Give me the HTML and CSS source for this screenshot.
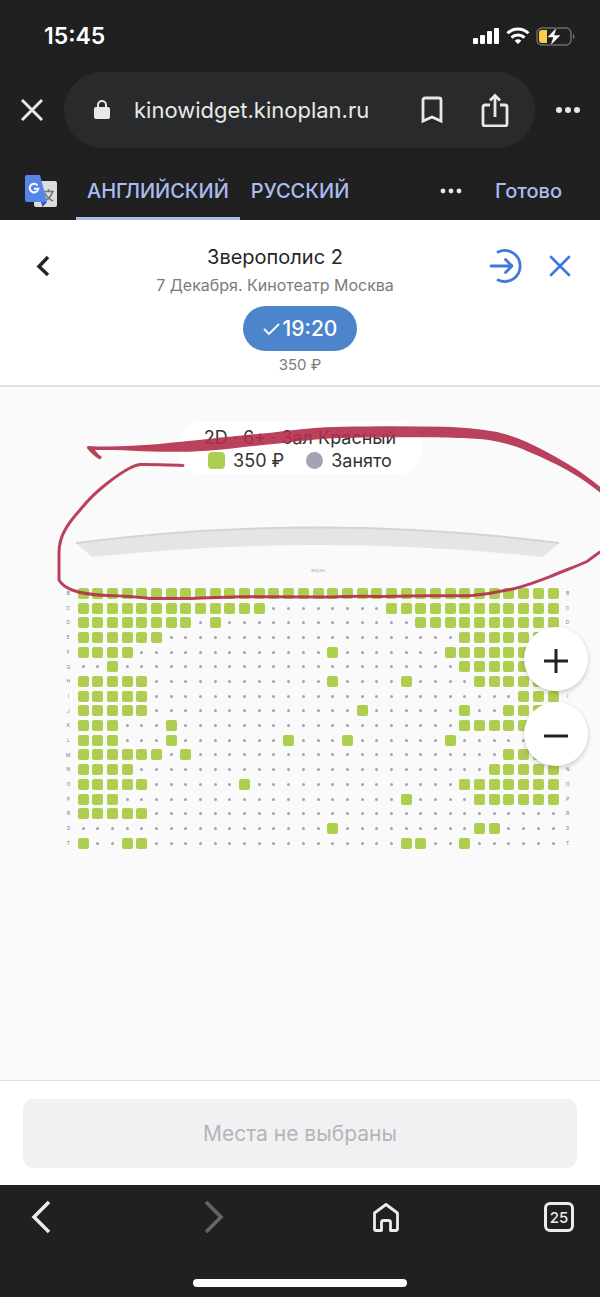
FILE: index.html
```html
<!DOCTYPE html>
<html lang="ru">
<head>
<meta charset="UTF-8" />
<meta name="viewport" content="width=device-width, initial-scale=1.0" />
<title>Зверополис 2</title>
<link rel="stylesheet" href="styles.css">
</head>
<body>
<div class="status">
<span class="clock">15:45</span>
<svg class="status-icons" width="104" height="20" viewBox="0 0 104 20" aria-hidden="true">
<g fill="#fff">
<rect x="1" y="12" width="5" height="6" rx="1"/>
<rect x="8" y="9" width="5" height="9" rx="1"/>
<rect x="15" y="5" width="5" height="13" rx="1"/>
<rect x="22" y="2" width="5" height="16" rx="1"/>
<path d="M46 18l-3.300-3.300a4.700 4.700 0 0 1 6.600 0z"/>
</g>
<g fill="none" stroke="#fff" stroke-width="3">
<path d="M35.500 7.200a15 15 0 0 1 21 0"/>
<path d="M39.500 11.600a9.300 9.300 0 0 1 13 0"/>
</g>
<rect x="65" y="2" width="34" height="17" rx="5" fill="none" stroke="#6c6c6c" stroke-width="1.500"/>
<path d="M101 8v5c2-.5 2-4.500 0-5z" fill="#6c6c6c"/>
<path d="M70 4h5v13h-5a3 3 0 0 1-3-3V7a3 3 0 0 1 3-3z" fill="#f7ce46"/>
<path d="M85 1L75 11.500h6l-3 8.500L89 9h-6.500z" fill="#fff" stroke="#202020" stroke-width=".6"/>
</svg>
</div>
<div class="browser">
<button class="icon-btn" aria-label="Закрыть вкладку">
<svg width="24" height="24" viewBox="0 0 24 24"><path d="M2 2l20 20M22 2L2 22" stroke="#e8e8e8" stroke-width="3" fill="none"/></svg>
</button>
<div class="address">
<svg class="lock" width="16" height="20" viewBox="0 0 16 20"><rect x="0" y="7" width="16" height="12" rx="2" fill="#e8e8e8"/><path d="M4 8V5a4 4 0 0 1 8 0v3" stroke="#e8e8e8" stroke-width="2" fill="none"/></svg>
<a class="url" href="#">kinowidget.kinoplan.ru</a>
<button class="icon-btn" aria-label="Закладка">
<svg width="22" height="28" viewBox="0 0 22 28"><path d="M2 25V4a2 2 0 0 1 2-2h14a2 2 0 0 1 2 2v21L11 21z" stroke="#e8e8e8" stroke-width="2.800" fill="none"/></svg>
</button>
<button class="icon-btn" aria-label="Поделиться">
<svg width="28" height="34" viewBox="0 0 28 34"><g stroke="#e8e8e8" stroke-width="2.800" fill="none"><path d="M9 12H4a2 2 0 0 0-2 2v17a2 2 0 0 0 2 2h20a2 2 0 0 0 2-2V14a2 2 0 0 0-2-2h-5M14 24V3M9 7.500L14 2.500l5 5"/></g></svg>
</button>
</div>
<button class="icon-btn" aria-label="Меню">
<svg width="26" height="8" viewBox="0 0 26 8" fill="#e8e8e8"><circle cx="4" cy="4" r="3"/><circle cx="13" cy="4" r="3"/><circle cx="22" cy="4" r="3"/></svg>
</button>
</div>
<div class="translate">
<svg class="logo" width="34" height="34" viewBox="0 0 34 34" aria-hidden="true">
<rect x="10" y="7" width="23" height="26" rx="2" fill="#dcdddd"/>
<path d="M19 17.500h11M24.500 15v2.500M28.500 17.500c-1 5-5 8-8.500 9.500M21 19c1 3 4 6 8 8" stroke="#6b7a7a" stroke-width="1.500" fill="none"/>
<path d="M17 28h6l-4.500 5z" fill="#3a50b8"/>
<path d="M3 1h13l7 27H3a2 2 0 0 1-2-2V3a2 2 0 0 1 2-2z" fill="#5585e8"/>
<path d="M13.500 11.500a4.300 4.300 0 1 0 .8 3.300H10" stroke="#fff" stroke-width="2" fill="none"/>
</svg>
<button class="lang active">АНГЛИЙСКИЙ</button>
<button class="lang">РУССКИЙ</button>
<button class="icon-btn more" aria-label="Настройки перевода">
<svg width="22" height="8" viewBox="0 0 22 8" fill="#e8e8e8"><circle cx="3" cy="4" r="2.400"/><circle cx="11" cy="4" r="2.400"/><circle cx="19" cy="4" r="2.400"/></svg>
</button>
<button class="done">Готово</button>
</div>
<header class="session">
<div class="session-top">
<button class="icon-btn back" aria-label="Назад">
<svg width="16" height="24" viewBox="0 0 16 24"><path d="M13 3L4 12.500l9 8.500" stroke="#262626" stroke-width="3.500" fill="none"/></svg>
</button>
<div class="film">
<h1>Зверополис 2</h1>
<p>7 Декабря. Кинотеатр Москва</p>
</div>
<div class="actions">
<button class="icon-btn" aria-label="Войти">
<svg width="36" height="36" viewBox="0 0 36 36"><path d="M10 4A15.500 15.500 0 1 1 10 32M3 18h20M17.500 11.500l6.500 6.500-6.500 6.500" stroke="#3f78dc" stroke-width="2.800" stroke-linecap="round" stroke-linejoin="round" fill="none"/></svg>
</button>
<button class="icon-btn" aria-label="Закрыть">
<svg width="24" height="24" viewBox="0 0 24 24"><path d="M3 3l18 18M21 3L3 21" stroke="#3f78dc" stroke-width="2.600" stroke-linecap="round" fill="none"/></svg>
</button>
</div>
</div>
<button class="time"><svg width="18" height="14" viewBox="0 0 18 14"><path d="M1 7l5 5L16 2" stroke="#fff" stroke-width="1.800" fill="none"/></svg>19:20</button>
<p class="price">350 ₽</p>
</header>
<main class="hall">
<div class="legend">
<p>2D · 6+ · Зал Красный</p>
<ul>
<li><i class="mark free"></i>350 ₽</li>
<li><i class="mark busy"></i>Занято</li>
</ul>
</div>
<div class="plan">
<svg class="screen" viewBox="0 0 482 34" aria-hidden="true">
<path d="M0 17Q241-14 482 17L466 31Q241 7 16 31z" fill="#e5e5e5"/>
<path d="M0 17Q241-14 482 17" stroke="#d4d4d4" stroke-width="2" fill="none"/>
</svg>
<p class="screen-label">экран</p>
<div class="seats" id="seats"></div>
</div>
<div class="zoom">
<button aria-label="Увеличить"><svg width="24" height="24" viewBox="0 0 24 24"><path d="M12 0v24M0 12h24" stroke="#222" stroke-width="3"/></svg></button>
<button aria-label="Уменьшить"><svg width="24" height="24" viewBox="0 0 24 24"><path d="M0 12h24" stroke="#222" stroke-width="3"/></svg></button>
</div>
</main>
<footer class="order">
<button class="submit" disabled>Места не выбраны</button>
</footer>
<nav class="toolbar">
<div class="tools">
<button class="icon-btn" aria-label="Назад"><svg width="36" height="36" viewBox="0 0 36 36"><path d="M26 3L11 18l15 15" stroke="#ececec" stroke-width="3.500" fill="none"/></svg></button>
<button class="icon-btn" aria-label="Вперёд"><svg width="36" height="36" viewBox="0 0 36 36"><path d="M10 3l15 15-15 15" stroke="#666" stroke-width="3.500" fill="none"/></svg></button>
<button class="icon-btn" aria-label="Домой"><svg width="36" height="36" viewBox="0 0 36 36"><path d="M6.500 14L18 5.500 29.500 14v16a1.500 1.500 0 0 1-1.500 1.500h-5.500v-8a2 2 0 0 0-2-2h-5a2 2 0 0 0-2 2v8H8A1.500 1.500 0 0 1 6.500 30z" stroke="#ececec" stroke-width="2.800" stroke-linejoin="round" fill="none"/></svg></button>
<button class="tabs">25</button>
</div>
<div class="home-bar"></div>
</nav>
<svg class="marker" viewBox="0 0 600 1297" aria-hidden="true">
<path d="M88 446C110 447.500 135 446 157 444.300C200 440 235 436 273 432.500C300 429 320 427 343 426.700C375 426 410 426 443 426.700C465 427.500 480 429 497 432C515 436 530 443 543 450C560 459 580 470 600 486.700V492.500C580 476 562 467 543 458C530 452 520 448 517 447C505 443 495 441 483 439.300C450 436.500 375 437 343 438C318 438.500 295 442 273 444C250 446 230 449 207 450.700C180 452.500 155 452 133 450.700C120 450 108 450 95 450C97 453 99 455 102 457L100 459.500C94 456 91 453 88 449.500Q86 447 88 446z" fill="#b32e4c"/>
<path d="M183 465.500C170 465 155 464.300 140 464.500Q133 466 130 468C122 472 114 478 107 483.500Q92 495 80 510Q70 521 65 530C61 537 59 545 59 553V580C62 585 67 588 72 590C80 593 94 595 107 595.500Q130 596 150 598.500H187C205 598 220 597 240 596.700L330 597Q350 596 380 596.500L427 595.700H470Q490 594 510 589.500C524 587 538 581 550 576.700C563 571 575 567 587 561.500L600 552" stroke="#b32e4c" stroke-width="3" stroke-linecap="round" fill="none"/>
</svg>
<script src="script.js"></script>
</body>
</html>
```
FILE: styles.css
```css
* {
box-sizing: border-box;
}
body {
margin: 0;
position: relative;
min-height: 100vh;
display: flex;
flex-direction: column;
background-color: #202020;
color: #262626;
font-family: Inter, 'Liberation Sans', sans-serif;
}
h1, p, ul {
margin: 0;
padding: 0;
font-weight: 400;
}
button {
padding: 0;
border: 0;
background: none;
font-family: inherit;
cursor: pointer;
}
svg {
display: block;
}
.icon-btn {
display: flex;
align-items: center;
justify-content: center;
}
/* phone status bar */
.status {
display: flex;
justify-content: space-between;
align-items: center;
height: 72px;
padding: 0 24px 0 44px;
}
.clock {
color: #fff;
font-size: 23px;
font-weight: 600;
}
/* browser bar */
.browser {
display: flex;
align-items: center;
gap: 20px;
padding: 0 19px 0 20px;
}
.address {
flex: 1;
display: flex;
align-items: center;
height: 76px;
padding: 0 26px 0 30px;
border-radius: 38px;
background-color: #292a2b;
}
.address .icon-btn {
margin-left: 38px;
}
.url {
flex: 1;
margin-left: 24px;
color: #e8e8e8;
font-size: 22px;
text-decoration: none;
white-space: nowrap;
}
.address .url + .icon-btn {
margin-left: 0;
}
/* translate bar */
.translate {
display: flex;
align-items: center;
height: 72px;
padding: 0 38px 0 24px;
}
.translate .logo {
margin-right: 18px;
}
.lang, .done {
height: 72px;
padding: 14px 11px 0;
color: #a9bdf0;
font-size: 20px;
font-weight: 500;
}
.translate .logo, .translate .more {
margin-top: 14px;
}
.lang.active {
border-bottom: 3px solid #a9bdf0;
padding-top: 17px;
}
.translate .more {
margin-left: auto;
margin-right: 22px;
}
.done {
padding-right: 0;
}
/* session header */
.session {
display: flex;
flex-direction: column;
align-items: center;
height: 167px;
padding-top: 23px;
background-color: #fff;
border-bottom: 2px solid #e0e0e2;
}
.session-top {
align-self: stretch;
display: flex;
padding: 0 24px;
}
.back {
width: 38px;
height: 46px;
}
.film {
flex: 1;
text-align: center;
}
.film h1 {
font-size: 20px;
line-height: 28px;
}
.film p {
color: #7b7b7b;
font-size: 16px;
line-height: 28px;
}
.actions {
display: flex;
align-items: center;
gap: 24px;
height: 46px;
width: 88px;
}
.time {
display: flex;
align-items: center;
justify-content: center;
gap: 2px;
width: 114px;
height: 45px;
margin-top: 7px;
border-radius: 23px;
background-color: #4c85cb;
color: #fff;
font-size: 21px;
font-weight: 500;
}
.price {
color: #7b7b7b;
font-size: 15px;
line-height: 28px;
}
/* hall */
.hall {
flex: 1;
position: relative;
padding-top: 35px;
background-color: #fafafa;
}
.legend {
width: fit-content;
margin: 0 auto;
padding: 4px 26px 2px;
border-radius: 24px;
background-color: #fff;
color: #333;
font-size: 18px;
line-height: 23px;
text-align: center;
}
.legend ul {
display: flex;
justify-content: center;
gap: 22px;
list-style-type: none;
}
.legend li {
display: flex;
align-items: center;
gap: 8px;
}
.mark {
width: 17px;
height: 17px;
}
.free {
border-radius: 4px;
background-color: #aece50;
}
.busy {
border-radius: 50%;
background-color: #a2a4b3;
}
.plan {
padding: 52px 25px 60px 61px;
}
.screen {
width: 94%;
margin: 0 auto;
}
.screen-label {
margin-top: 6px;
color: #b5b5b5;
font-size: 5px;
line-height: 8px;
text-align: center;
}
.seats {
display: grid;
grid-template-columns: repeat(35, 1fr);
margin-top: 12px;
}
.row-name {
color: #777a8c;
font-size: 5px;
line-height: 14px;
text-align: center;
}
.seat {
display: flex;
align-items: center;
justify-content: center;
aspect-ratio: 1;
}
.seat::before {
content: '';
width: 11px;
height: 11px;
border-radius: 2px;
background-color: #aece50;
}
.seat.occupied::before {
width: 3px;
height: 3px;
background-color: #a2a4b3;
}
.zoom {
position: absolute;
top: 240px;
right: 12px;
display: flex;
flex-direction: column;
gap: 11px;
}
.zoom button {
display: flex;
align-items: center;
justify-content: center;
width: 64px;
height: 64px;
padding-top: 4px;
border-radius: 50%;
background-color: #fff;
box-shadow: 0 2px 5px rgba(0, 0, 0, 0.2);
}
/* order */
.order {
padding: 18px 23px 17px;
background-color: #fff;
border-top: 1px solid #e0e0e2;
}
.submit {
width: 100%;
height: 69px;
border-radius: 11px;
background-color: #f1f1f3;
color: #b5b5b8;
font-size: 21px;
}
/* browser toolbar */
.toolbar {
height: 112px;
padding: 14px 23px 0;
}
.tools {
display: flex;
justify-content: space-between;
align-items: center;
}
.tabs {
width: 30px;
height: 30px;
margin: 0 3px;
border: 3px solid #ececec;
border-radius: 6px;
color: #ececec;
font-size: 15px;
font-weight: 500;
}
.home-bar {
width: 214px;
height: 8px;
margin: 44px auto 0;
border-radius: 4px;
background-color: #fff;
}
/* hand drawn line over the page */
.marker {
position: absolute;
top: 0;
left: 0;
width: 100%;
opacity: 0.9;
pointer-events: none;
}
```
FILE: script.js
```javascript
// free seats in each row, everything else is taken
const rows = [
['B', '0-32'],
['C', '0-12,21-32'],
['D', '0-7,9,23-32'],
['E', '0-5,26-32'],
['F', '0-3,17,25-32'],
['G', '2,26-32'],
['H', '0-4,17,22,27-32'],
['I', '0-4,30-32'],
['J', '0-4,19,26,29-32'],
['K', '0-2,6,26-32'],
['L', '0-2,6,14,18,25'],
['M', '0-5,7,29-32'],
['N', '0-3,28-32'],
['O', '0-4,11,26-32'],
['P', '0-2,22,27-32'],
['R', '0-4'],
['S', '17,27-28'],
['T', '0,3-4,22-23,26']
];
const seats = document.getElementById('seats');

function isFree(list, col) {
return list.split(',').some(part => {
const [from, to] = part.split('-').map(Number);
return col >= from && col <= (to === undefined ? from : to);
});
}
function addName(name) {
const el = document.createElement('span');
el.className = 'row-name';
el.innerText = name;
seats.appendChild(el);
}

rows.forEach(([name, list]) => {
addName(name);
for (let col = 0; col < 33; col++) {
const seat = document.createElement('button');
seat.className = 'seat';
seat.setAttribute('aria-label', 'Ряд ' + name + ', место ' + (col + 1));
if (!isFree(list, col)) {
seat.classList.add('occupied');
seat.disabled = true;
}
seats.appendChild(seat);
}
addName(name);
});
```
